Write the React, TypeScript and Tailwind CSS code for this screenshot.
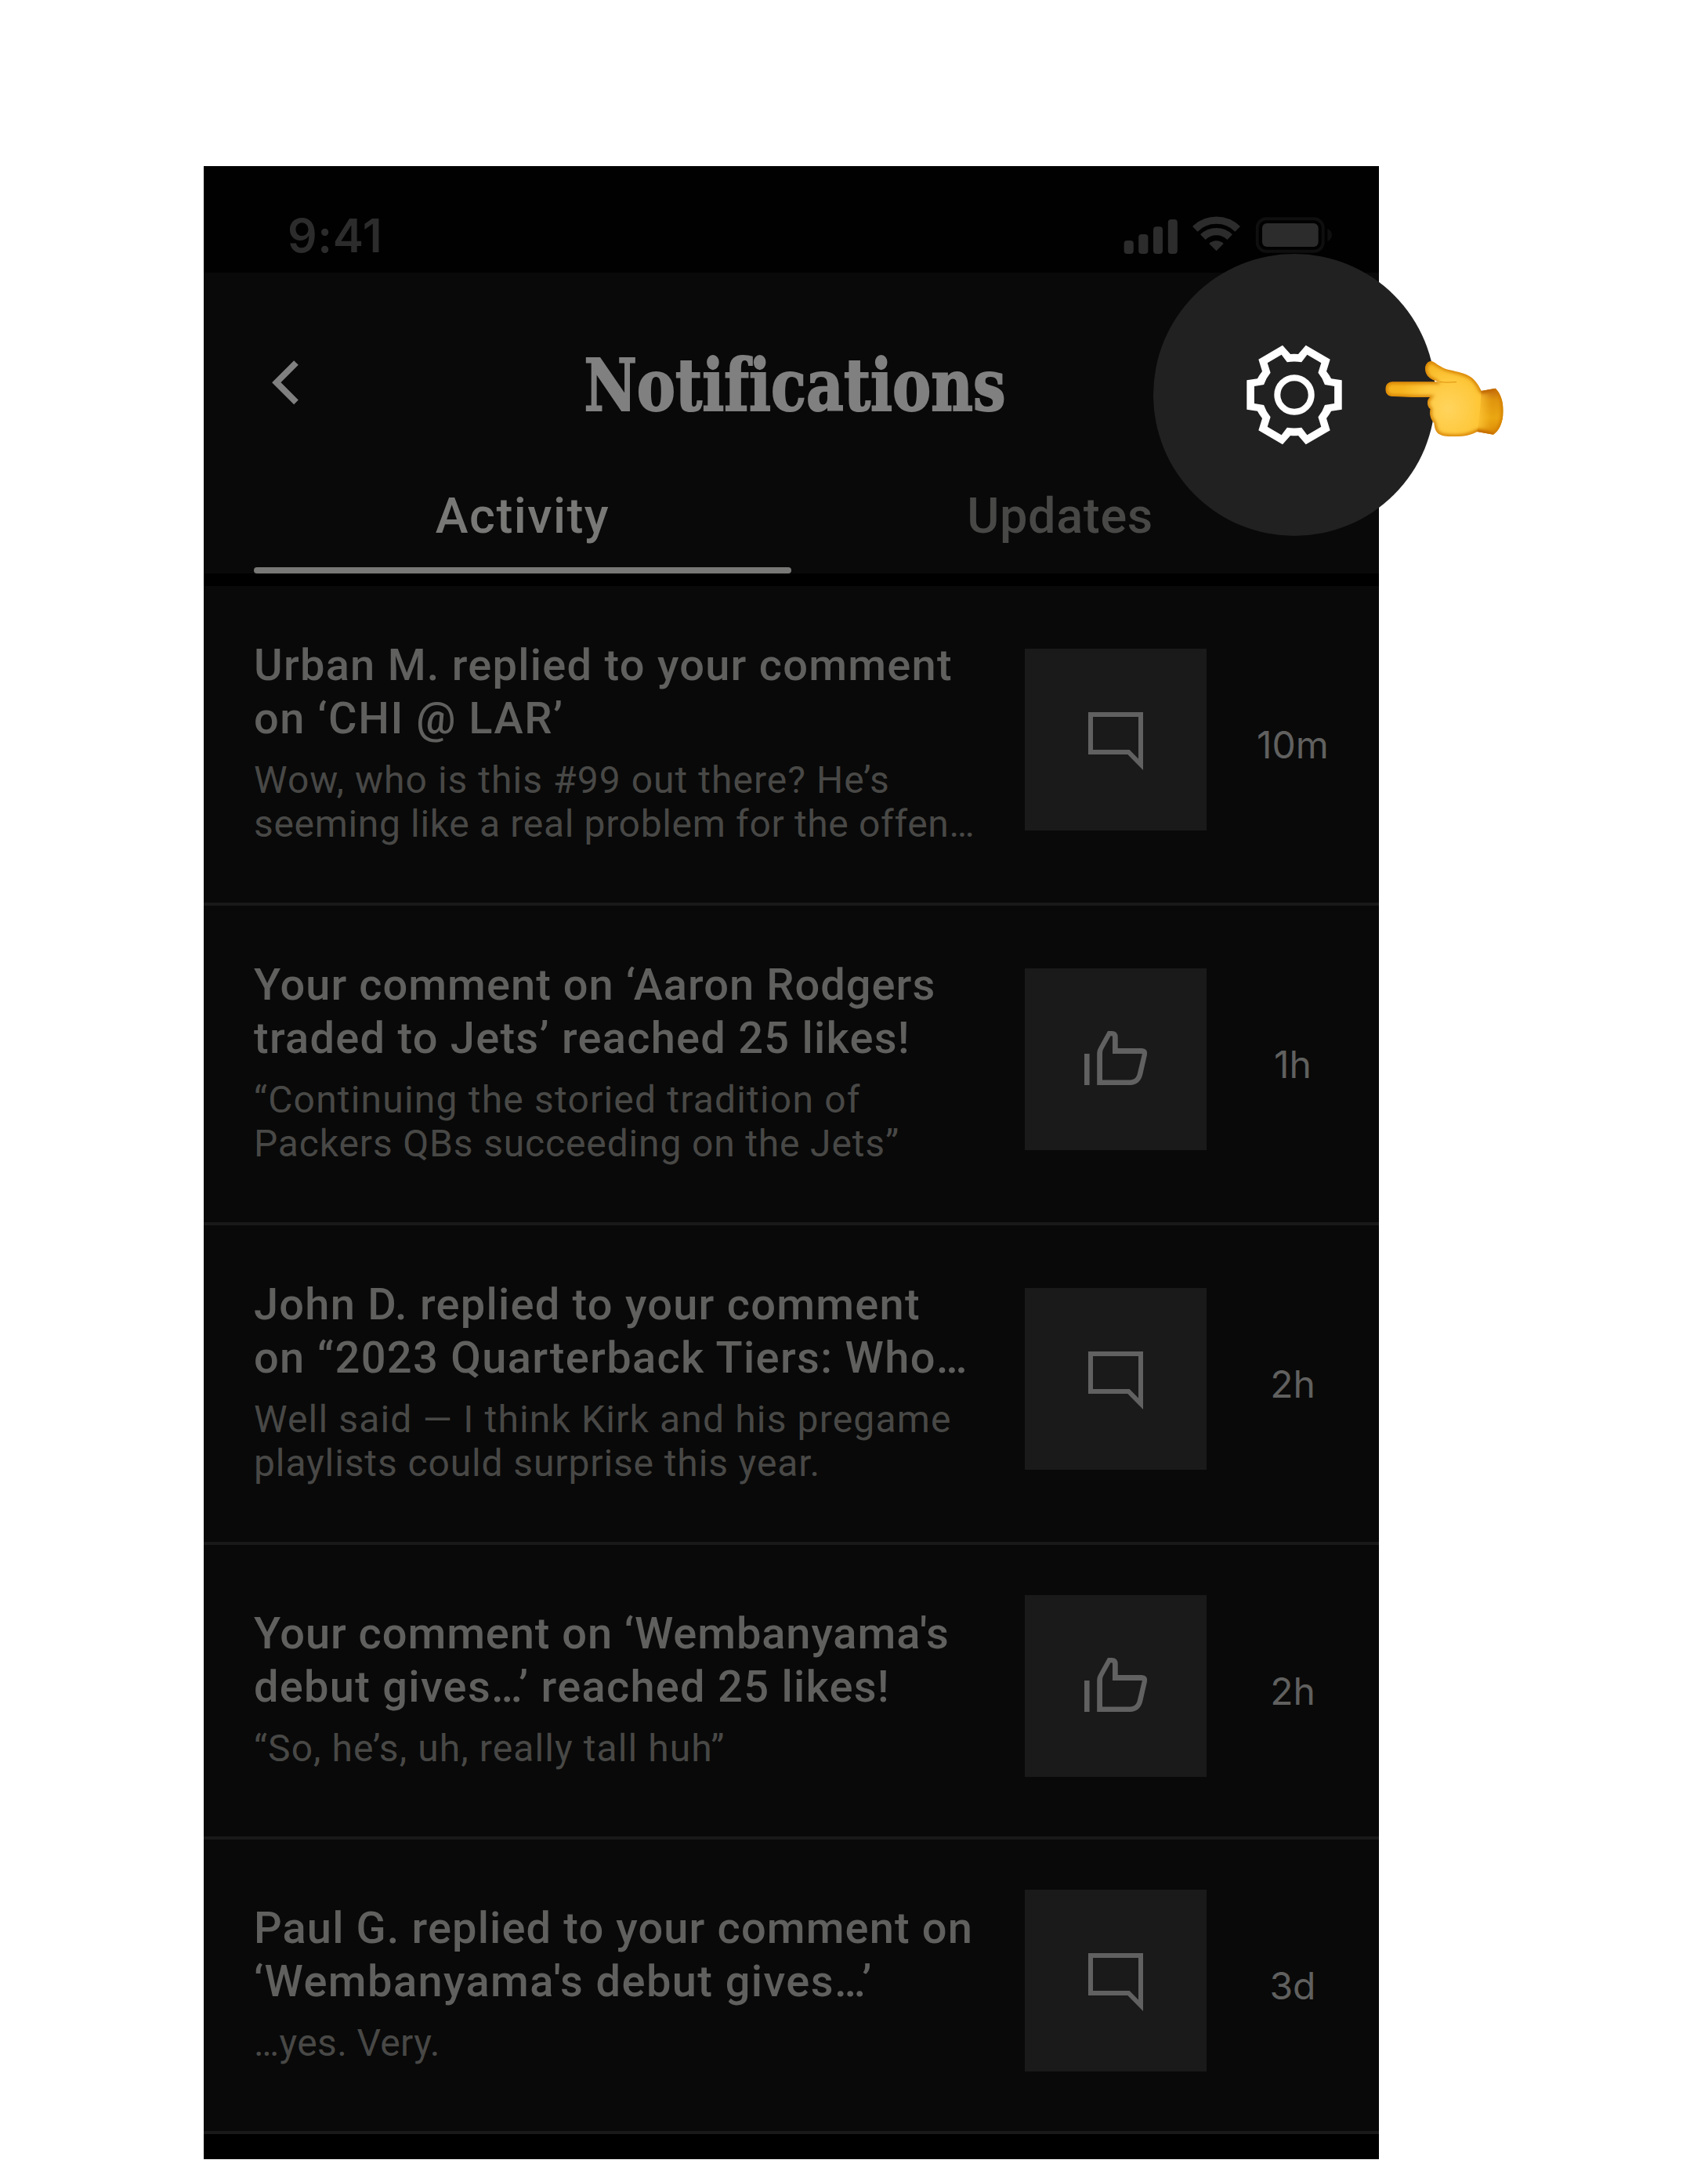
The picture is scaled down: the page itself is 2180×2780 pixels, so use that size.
type Line = { text: string; track: string };
type Kind = "comment" | "like";
type Item = { kind: Kind; title: Line[]; body: Line[]; time: string };

const items: Item[] = [
  {
    kind: "comment",
    title: [
      { text: "Urban M. replied to your comment", track: "tracking-[1.24px]" },
      { text: "on ‘CHI @ LAR’", track: "tracking-[1.5px]" },
    ],
    body: [
      { text: "Wow, who is this #99 out there? He’s", track: "tracking-[1.04px]" },
      { text: "seeming like a real problem for the offen…", track: "tracking-[0.66px]" },
    ],
    time: "10m",
  },
  {
    kind: "like",
    title: [
      { text: "Your comment on ‘Aaron Rodgers", track: "tracking-[1.03px]" },
      { text: "traded to Jets’ reached 25 likes!", track: "tracking-[1.25px]" },
    ],
    body: [
      { text: "“Continuing the storied tradition of", track: "tracking-[1.19px]" },
      { text: "Packers QBs succeeding on the Jets”", track: "tracking-[0.84px]" },
    ],
    time: "1h",
  },
  {
    kind: "comment",
    title: [
      { text: "John D. replied to your comment", track: "tracking-[1.23px]" },
      { text: "on “2023 Quarterback Tiers: Who…", track: "tracking-[1.33px]" },
    ],
    body: [
      { text: "Well said — I think Kirk and his pregame", track: "tracking-[1.15px]" },
      { text: "playlists could surprise this year.", track: "tracking-[0.88px]" },
    ],
    time: "2h",
  },
  {
    kind: "like",
    title: [
      { text: "Your comment on ‘Wembanyama's", track: "tracking-[0.91px]" },
      { text: "debut gives…’ reached 25 likes!", track: "tracking-[1.27px]" },
    ],
    body: [{ text: "“So, he’s, uh, really tall huh”", track: "tracking-[1.08px]" }],
    time: "2h",
  },
  {
    kind: "comment",
    title: [
      { text: "Paul G. replied to your comment on", track: "tracking-[1.12px]" },
      { text: "‘Wembanyama's debut gives…’", track: "tracking-[1.4px]" },
    ],
    body: [{ text: "…yes. Very.", track: "tracking-[0.35px]" }],
    time: "3d",
  },
];

function StatusIcons() {
  return (
    <svg width="274" height="60" viewBox="1430 271 274 60" fill="#2c2c2c">
      <rect x="1434.6" y="307" width="12.2" height="17" rx="4" />
      <rect x="1453.2" y="299" width="12.2" height="25" rx="4" />
      <rect x="1472" y="289.3" width="12" height="34.7" rx="4" />
      <rect x="1490.8" y="280" width="12" height="44" rx="4" />
      <g fill="none" stroke="#2c2c2c">
        <path d="M1525.3 292.4a38.5 38.5 0 0 1 54.4 0" strokeWidth="9.4" />
        <path d="M1535.3 302.6a24.6 24.6 0 0 1 34.4 0" strokeWidth="9.4" />
      </g>
      <path d="M1552.5 320.2l-9.2 -9.3a13.5 13.5 0 0 1 18.4 0z" />
      <rect x="1604.7" y="279.2" width="84" height="41.6" rx="11.5" fill="none" stroke="#0f0f0f" strokeWidth="4" />
      <rect x="1611" y="285" width="71.7" height="30" rx="6" />
      <path d="M1694.3 291.7c3.6 1.6 5.7 4.6 5.7 8.2s-2.1 6.600-5.700 8.200z" fill="#0f0f0f" />
    </svg>
  );
}

function CommentIcon() {
  return (
    <svg width="232" height="232" viewBox="0 0 232 232">
      <path d="M84 84H148V147.800L132.400 132H84Z" fill="none" stroke="#616161" strokeWidth="6" strokeMiterlimit="10" />
    </svg>
  );
}

function LikeIcon() {
  return (
    <svg width="232" height="232" viewBox="0 0 232 232" fill="#616161">
      <path d="M76 109h6.600v40h-6.600z" />
      <path
        fillRule="evenodd"
        d="M92.200 149V108.500Q92.200 105 94 101.800L106 80H111Q118.700 80 118.700 88V102H149.300Q157.500 102.500 155.900 110.700L150.300 135.500C148.300 144 142.500 149 134.500 149ZM99 142.400H134.500C139.500 142.400 142.700 139.500 143.800 134.500L149.900 109H112V87.500Q112 86.300 110.500 86.300H109.500L100.200 103Q99 105.200 99 108Z"
      />
    </svg>
  );
}

function Gear() {
  return (
    <svg width="360" height="360" viewBox="-180 -180 360 360" fill="#fff">
      <path
        fillRule="evenodd"
        d="M-15 -63.300L-5 -51.900Q0 -52.400 5 -51.900L14.700 -63.300L45.700 -45.300L41 -30Q44.600 -25.500 47.100 -20.700L60.700 -18.700V18.700L47.100 20.700Q44.600 25.500 41 30L45.700 45.300L14.700 63.300L5 51.900Q0 52.400 -5 51.900L-15 63.300L-45.700 45.300L-41 30Q-44.600 25.500 -47.100 20.700L-60.700 18.700V-18.700L-47.100 -20.700Q-44.600 -25.500 -41 -30L-45.700 -45.300Z
        M-16.400 -51.300L-34.300 -40.700L-30.400 -28.300Q-36 -21.500 -38.900 -13L-51.100 -11V11L-38.900 13Q-36 21.500 -30.400 28.300L-34.300 40.700L-16.400 51.300L-9.200 41.700Q0 43.300 9.200 41.700L16.400 51.300L34.300 40.700L30.400 28.300Q36 21.500 38.900 13L51.100 11V-11L38.900 -13Q36 -21.500 30.400 -28.300L34.300 -40.700L16.400 -51.300L9.200 -41.700Q0 -43.300 -9.200 -41.700Z"
      />
      <circle r="21.700" fill="none" stroke="#fff" strokeWidth="8" />
    </svg>
  );
}

const handPath =
  "M52 172C34 172 25 185 25 200C25 216 34 227 52 228L130 231L195 231C186 239 184 252 188 265C190 271 194 274 197 277C194 287 195 301 199 311C202 319 207 324 211 330C213 348 216 362 228 371C243 381 270 382 295 382C330 381 357 374 376 363L438 374C458 361 476 330 476 284C476 243 464 214 446 197L392 207C384 190 372 168 352 154C330 139 300 134 272 127C243 120 229 108 208 95C192 88 176 103 177 124C178 141 188 157 206 164C210 166 215 168 219 172Z";

function PointingHand() {
  return (
    <svg width="180" height="150" viewBox="0 0 540 450">
      <defs>
        <clipPath id="hand-clip">
          <path d={handPath} />
        </clipPath>
        <radialGradient id="hand-fill" gradientUnits="userSpaceOnUse" cx="265" cy="275" r="190">
          <stop offset="0" stopColor="#ffd45d" />
          <stop offset="0.6" stopColor="#fec83c" />
          <stop offset="1" stopColor="#f5b41e" />
        </radialGradient>
        <linearGradient id="hand-cuff" x1="0" y1="0" x2="0" y2="1">
          <stop offset="0" stopColor="#b96012" />
          <stop offset="0.25" stopColor="#df940e" />
          <stop offset="0.6" stopColor="#eba712" />
          <stop offset="1" stopColor="#d58203" />
        </linearGradient>
        <linearGradient id="hand-fade" x1="0" y1="0" x2="1" y2="0">
          <stop offset="0" stopColor="#ffc738" stopOpacity="1" />
          <stop offset="1" stopColor="#ffc738" stopOpacity="0" />
        </linearGradient>
        <filter id="hand-soft" x="-20%" y="-20%" width="140%" height="140%">
          <feGaussianBlur stdDeviation="6" />
        </filter>
      </defs>
      <g clipPath="url(#hand-clip)">
        <path d={handPath} fill="url(#hand-fill)" />
        <path d="M392 190H490V390H368C384 340 390 260 392 190Z" fill="url(#hand-cuff)" />
        <path d="M372 215H430V352H368Z" fill="url(#hand-fade)" filter="url(#hand-soft)" />
        <path d={handPath} fill="none" stroke="#d27c02" strokeWidth="14" filter="url(#hand-soft)" />
        <path d="M219 171Q255 177 296 173" fill="none" stroke="#dd920e" strokeWidth="3" strokeLinecap="round" />
        <path d="M392 207L446 197M376 363L438 374" fill="none" stroke="#b0540c" strokeWidth="7" filter="url(#hand-soft)" />
      </g>
      <path d="M213 166Q222 172 238 171.500L214 171.500Z" fill="#fff6e0" />
    </svg>
  );
}

function NotificationRow({ item }: { item: Item }) {
  const short = item.body.length === 1;
  return (
    <li
      className={
        "flex items-start border-b-4 border-[#191919] bg-[#090909] pl-16 " +
        (short ? "h-[376px] pt-16" : "h-[408px] pt-20")
      }
    >
      <div className={"w-[984px] whitespace-nowrap " + (short ? "mt-[15px]" : "-mt-[13px]")}>
        <h2 className="text-[56px] leading-[68px] font-medium text-[#60605f]">
          {item.title.map((l) => (
            <span key={l.text} className={"block " + l.track}>{l.text}</span>
          ))}
        </h2>
        <p className="mt-[17px] text-[48px] leading-[56px] text-[#484846]">
          {item.body.map((l) => (
            <span key={l.text} className={"block " + l.track}>{l.text}</span>
          ))}
        </p>
      </div>
      <div className="size-[232px] shrink-0 bg-[#1a1a1a]">
        {item.kind === "comment" ? <CommentIcon /> : <LikeIcon />}
      </div>
      <time className="mt-[95px] flex-1 text-center font-[Inter,sans-serif] text-[48px] leading-[56px] text-[#60605f]">
        {item.time}
      </time>
    </li>
  );
}

export default function App() {
  return (
    <div className="relative h-[2780px] w-[2180px] overflow-hidden bg-white pt-[212px] pl-[260px] font-[Roboto,sans-serif]">
      <main className="h-[2544px] w-[1500px] bg-black">
        <div className="flex h-[136px] items-start justify-between bg-[#010101] pt-[59px] pr-14 pl-[107px]">
          <span className="font-[Inter,sans-serif] text-[59px] leading-[59px] font-semibold tracking-[0.58px] text-[#2c2c2c]">
            9:41
          </span>
          <StatusIcons />
        </div>

        <header className="flex h-[384px] flex-col bg-[#090909]">
          <div className="grid h-[279px] grid-cols-[160px_1fr_160px] items-start">
            <svg className="mt-[100px] ml-[76px]" width="56" height="80" viewBox="336 448 56 80">
              <path d="M378 463l-25.200 25.200l25.200 25.200" fill="none" stroke="#808080" strokeWidth="8" />
            </svg>
            <h1 className="mt-[98px] ml-[9px] scale-x-[0.9] text-center font-['DejaVu_Serif_Condensed','DejaVu_Serif',serif] text-[91px] leading-[92px] font-bold tracking-[0.1px] text-[#808080] [-webkit-text-stroke:2px_#808080] [font-variant-ligatures:common-ligatures]">
              Notifications
            </h1>
          </div>
          <nav className="flex h-[105px] px-16 text-[63px] leading-[63px] font-medium">
            <div className="flex flex-1 flex-col items-center justify-between text-[#787876]">
              <span className="tracking-[1.43px]">Activity</span>
              <span className="h-2 w-full rounded-full bg-[#787876]" />
            </div>
            <div className="flex-1 text-center tracking-[0.63px] text-[#484847]">Updates</div>
          </nav>
        </header>

        <ul className="mt-4">
          {items.map((item) => (
            <NotificationRow key={item.title[0].text} item={item} />
          ))}
        </ul>
      </main>

      <button className="absolute top-[324px] left-[1472px] size-[360px] rounded-full bg-[#212121]" aria-label="Settings">
        <Gear />
      </button>
      <div className="absolute top-[430px] left-[1760px]">
        <PointingHand />
      </div>
    </div>
  );
}
